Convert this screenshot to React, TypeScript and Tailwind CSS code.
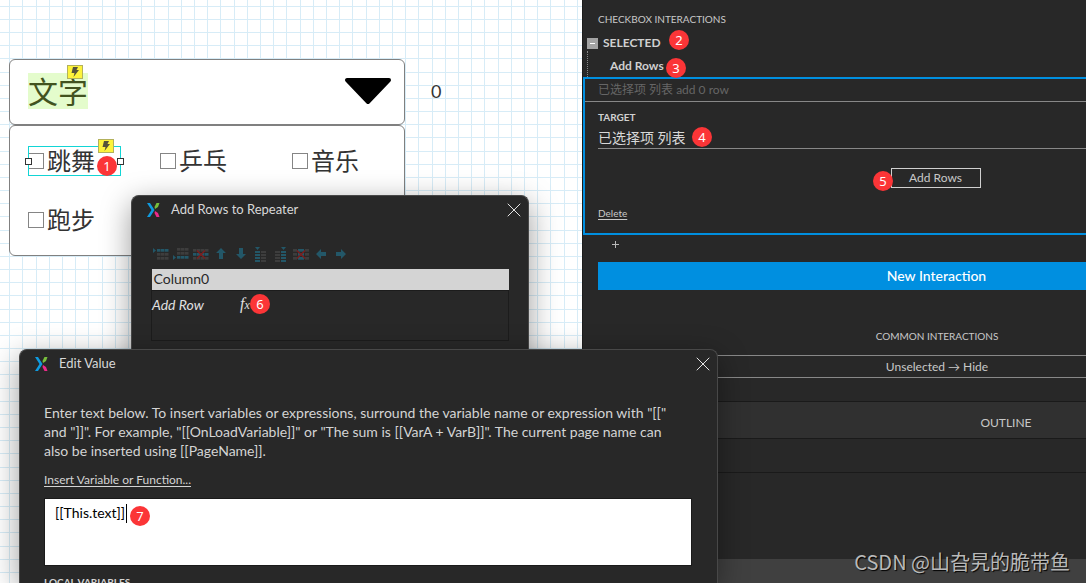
import type { ReactNode } from "react";
import { X } from "lucide-react";

const OPTIONS = ["跳舞", "乒乓", "音乐", "跑步"];

const BADGES = [
  { n: 1, pos: "left-[97px] top-[156px]" },
  { n: 2, pos: "left-[669px] top-[30px]" },
  { n: 3, pos: "left-[666px] top-[58px]" },
  { n: 4, pos: "left-[692px] top-[127px]" },
  { n: 5, pos: "left-[873px] top-[171px]" },
  { n: 6, pos: "left-[250px] top-[294px]" },
  { n: 7, pos: "left-[130px] top-[506px]" },
];

const BLUE = "#235768";
const GRAY = "#3d3d3d";
const RED = "#7a1f1f";

function Cells({ xs, ys, w, h, fill }: { xs: number[]; ys: number[]; w: number; h: number; fill: string }) {
  return (
    <>
      {ys.map((y) => xs.map((x) => <rect key={`${x}-${y}`} x={x} y={y} width={w} height={h} fill={fill} />))}
    </>
  );
}

const TOOLS: { name: string; icon: ReactNode }[] = [
  {
    name: "Insert row above",
    icon: (
      <>
        <path d="M0 1v5l3-2.500z" fill={BLUE} />
        <Cells xs={[4, 8, 12]} ys={[2]} w={3.5} h={2.7} fill={BLUE} />
        <Cells xs={[4, 8, 12]} ys={[6, 10]} w={3.5} h={2.7} fill={GRAY} />
      </>
    ),
  },
  {
    name: "Insert row below",
    icon: (
      <>
        <path d="M0 8v5l3-2.500z" fill={BLUE} />
        <Cells xs={[4, 8, 12]} ys={[1, 5]} w={3.5} h={2.7} fill={GRAY} />
        <Cells xs={[4, 8, 12]} ys={[9]} w={3.5} h={2.7} fill={BLUE} />
      </>
    ),
  },
  {
    name: "Delete row",
    icon: (
      <>
        <Cells xs={[0, 4, 8, 12]} ys={[2, 10]} w={3.5} h={2.7} fill={GRAY} />
        <Cells xs={[0, 4, 8, 12]} ys={[6]} w={3.5} h={2.7} fill={BLUE} />
        <path d="M4 3.500l8 8M12 3.500l-8 8" stroke={RED} strokeWidth="1.500" />
      </>
    ),
  },
  { name: "Move row up", icon: <path d="M8 1l5 5H10v6H6V6H3z" fill={BLUE} /> },
  { name: "Move row down", icon: <path d="M8 12l5-5H10V1H6v6H3z" fill={BLUE} /> },
  {
    name: "Insert column left",
    icon: (
      <>
        <path d="M2 0h5l-2.500 3z" fill={BLUE} />
        <Cells xs={[2]} ys={[4, 7, 10, 13]} w={5} h={2} fill={BLUE} />
        <Cells xs={[8]} ys={[4, 7, 10, 13]} w={5} h={2} fill={GRAY} />
      </>
    ),
  },
  {
    name: "Insert column right",
    icon: (
      <>
        <path d="M8 0h5l-2.500 3z" fill={BLUE} />
        <Cells xs={[2]} ys={[4, 7, 10, 13]} w={5} h={2} fill={GRAY} />
        <Cells xs={[8]} ys={[4, 7, 10, 13]} w={5} h={2} fill={BLUE} />
      </>
    ),
  },
  {
    name: "Delete column",
    icon: (
      <>
        <Cells xs={[0, 12]} ys={[2, 6, 10]} w={4} h={2.7} fill={GRAY} />
        <Cells xs={[5]} ys={[2, 6, 10]} w={6} h={2.7} fill={BLUE} />
        <path d="M4 3.500l8 8M12 3.500l-8 8" stroke={RED} strokeWidth="1.500" />
      </>
    ),
  },
  { name: "Move column left", icon: <path d="M3 7l5-5v3h5v4H8v3z" fill={BLUE} /> },
  { name: "Move column right", icon: <path d="M13 7L8 2v3H3v4h5v3z" fill={BLUE} /> },
];

function CanvasGrid() {
  return (
    <svg className="absolute inset-0 h-full w-full" aria-hidden="true">
      <defs>
        <pattern id="grid" x="-4" y="-7" width="66" height="79" patternUnits="userSpaceOnUse">
          <path
            d="M.5 0v79M13.500 0v79M26.500 0v79M40.500 0v79M53.500 0v79M0 .5h66M0 13.500h66M0 26.500h66M0 39.500h66M0 52.500h66M0 65.500h66"
            stroke="#d7ecf7"
          />
        </pattern>
      </defs>
      <rect width="100%" height="100%" fill="url(#grid)" />
    </svg>
  );
}

function Bolt({ className }: { className: string }) {
  return (
    <span className={`absolute flex h-[14px] w-4 items-center justify-center border border-[#b3b15c] bg-[#fdf33c] ${className}`}>
      <svg width="8" height="10" viewBox="0 0 8 10" aria-hidden="true">
        <path d="M2 0h5L5.500 3H8L2.500 10l1-4H.5z" fill="#55533a" />
      </svg>
    </span>
  );
}

function Logo() {
  return (
    <svg width="13" height="14" viewBox="0 0 13 14" aria-hidden="true">
      <path d="M0 0h3l4.500 7-4.500 7H0l4.500-7z" fill="#0f9be0" />
      <path d="M9.500 0H12.500L11 4 8 6 7.500 4z" fill="#78bf3c" />
      <path d="M7.500 10L8 8l3 2 1.500 4H9.500z" fill="#ee2a8b" />
    </svg>
  );
}

function Dialog({ title, className, children }: { title: string; className: string; children: ReactNode }) {
  return (
    <section
      aria-label={title}
      className={`absolute rounded-t-lg border border-b-0 border-[#484848] bg-[#282828] shadow-[0_8px_30px_rgba(0,0,0,0.4)] ${className}`}
    >
      <header className="flex h-7 items-center gap-[11px] pl-[15px] pr-[2px]">
        <Logo />
        <h2 className="flex-1 text-[13px] text-[#d8d8d8]">{title}</h2>
        <button type="button" aria-label="Close" className="text-[#e4e4e4]">
          <X size={24} strokeWidth={1} absoluteStrokeWidth />
        </button>
      </header>
      {children}
    </section>
  );
}

function Canvas() {
  return (
    <main className="relative flex w-[582px] shrink-0 items-start bg-white pl-[9px] pt-[59px] text-[#333]">
      <CanvasGrid />
      <div className="relative w-[396px]">
        <button
          type="button"
          className="flex h-[66px] w-full items-center justify-between rounded-md border border-[#808080] bg-white pb-[2px] pl-[18px] pr-[11px]"
        >
          <span className="relative bg-[#e4fccc] text-[30px] leading-9 text-[#42531f]">
            文字
            <Bolt className="-top-2 left-[39px]" />
          </span>
          <svg width="50" height="30" viewBox="0 0 50 30" aria-hidden="true">
            <path d="M4 4H46L25 26z" fill="#000" stroke="#000" strokeWidth="4" strokeLinejoin="round" />
          </svg>
        </button>
        <div className="grid h-[131px] grid-cols-[132px_132px_auto] rounded-md border border-[#808080] bg-white py-[6px]">
          {OPTIONS.map((option, i) => (
            <label key={option} className="flex items-center pl-[18px]">
              <span className="relative flex h-[30px] items-center gap-[3px] text-2xl">
                <input type="checkbox" className="size-4 appearance-none border border-[#858585] bg-white" />
                {option}
                {i === 0 && (
                  <span className="absolute -right-[26px] inset-y-0 left-0 border border-[#12d5d5]">
                    <span className="absolute -left-1 top-[11px] size-[7px] border border-[#333] bg-white" />
                    <span className="absolute -right-1 top-[11px] size-[7px] border border-[#333] bg-white" />
                    <Bolt className="-top-2 left-[69px]" />
                  </span>
                )}
              </span>
            </label>
          ))}
        </div>
      </div>
      <span className="relative ml-[26px] mt-5 text-lg leading-6">0</span>
    </main>
  );
}

function InteractionPanel() {
  return (
    <aside className="min-w-0 flex-1 overflow-hidden border-l border-[#1c1c1c] bg-[#282828] text-xs text-[#c8c8c8]">
      <div className="flex h-full min-w-[708px] flex-col">
        <h2 className="pl-[15px] pt-[11px] text-[10px] leading-4">CHECKBOX INTERACTIONS</h2>
        <div className="mt-2 flex h-4 items-center gap-[5px] pl-1">
          <button type="button" aria-label="Collapse" className="flex size-[11px] items-center justify-center bg-[#a3a3a3]">
            <span className="h-px w-[5px] bg-white" />
          </button>
          <h3 className="font-bold text-[#d0d0d0]">SELECTED</h3>
        </div>
        <div className="ml-1 flex h-[26px] items-center border-l border-dotted border-[#888] pl-[22px] pt-1 font-bold text-[#d0d0d0]">
          Add Rows
        </div>

        <section className="border-2 border-[#008fe0]">
          <p className="h-[23px] border-b border-[#888] pl-[13px] leading-[22px] text-[#666]">已选择项 列表 add 0 row</p>
          <div className="pb-3 pl-[13px] pr-4">
            <label htmlFor="target" className="block pb-px pt-[7px] text-[10px] font-bold leading-4 text-[#d0d0d0]">
              TARGET
            </label>
            <input
              id="target"
              defaultValue="已选择项 列表"
              className="block h-[23px] w-full border-b border-[#888] bg-transparent text-sm text-[#d8d8d8] outline-none"
            />
            <div className="flex justify-center pt-[19px]">
              <button type="button" className="h-5 w-[90px] border border-[#d0d0d0] leading-4">
                Add Rows
              </button>
            </div>
            <button type="button" className="mt-[17px] block text-[10px] leading-4 underline underline-offset-2">
              Delete
            </button>
          </div>
        </section>

        <button type="button" aria-label="Add action" className="ml-[29px] mt-[6px] block size-[7px]">
          <svg width="7" height="7" viewBox="0 0 7 7" aria-hidden="true">
            <path d="M3.500 0v7M0 3.500h7" stroke="#b8b8b8" />
          </svg>
        </button>
        <div className="pl-[15px] pr-4 pt-[14px]">
          <button type="button" className="h-7 w-full bg-[#008fe0] text-sm font-medium text-white">
            New Interaction
          </button>
        </div>
        <h2 className="mt-[38px] text-center text-[10px] leading-4">COMMON INTERACTIONS</h2>
        <button type="button" className="mx-4 mt-[11px] h-[23px] border-y border-[#888]">
          Unselected → Hide
        </button>

        <div className="mt-[23px] flex h-[38px] items-center justify-center border-y border-[#1a1a1a] bg-[#303030] pl-[138px] pt-[5px]">
          OUTLINE
        </div>
        <div className="h-[34px] border-b border-[#1a1a1a]" />
        <div className="flex-1" />
        <div className="h-6 bg-[#404040]" />
      </div>
    </aside>
  );
}

export default function App() {
  return (
    <div className="relative flex h-screen overflow-hidden font-[Lato,'Noto_Sans_CJK_SC',sans-serif]">
      <Canvas />
      <InteractionPanel />

      <Dialog title="Add Rows to Repeater" className="left-[131px] top-[195px] h-[388px] w-[398px]">
        <div className="px-[19px] pt-[23px]">
          <div className="flex gap-1 pl-[2px]">
            {TOOLS.map((tool) => (
              <button key={tool.name} type="button" aria-label={tool.name}>
                <svg width="16" height="15" viewBox="0 0 16 15" aria-hidden="true">
                  {tool.icon}
                </svg>
              </button>
            ))}
          </div>
          <table className="mt-[7px] w-full text-left text-sm">
            <thead>
              <tr className="bg-[#d4d4d4] text-[#282828]">
                <th className="h-[21px] pl-[2px] font-normal leading-5">Column0</th>
              </tr>
            </thead>
            <tbody>
              <tr>
                <td className="h-[50px] border border-[#1c1c1c] pt-1 align-top italic leading-5 text-[#e0e0e0]">
                  <div className="flex h-5 items-center">
                    <button type="button" className="w-[88px] text-left italic">
                      Add Row
                    </button>
                    <button type="button" aria-label="Edit value" className="font-['Liberation_Serif',serif] italic">
                      <span className="text-base leading-5">f</span>
                      <span className="text-xs">x</span>
                    </button>
                  </div>
                </td>
              </tr>
            </tbody>
          </table>
        </div>
      </Dialog>

      <Dialog title="Edit Value" className="left-[19px] top-[349px] h-[234px] w-[699px]">
        <div className="px-6 pt-[25px] text-[#d4d4d4]">
          <p className="whitespace-nowrap text-sm leading-[19px]">
            Enter text below. To insert variables or expressions, surround the variable name or expression with "[["
            <br />
            and "]]". For example, "[[OnLoadVariable]]" or "The sum is [[VarA + VarB]]". The current page name can
            <br />
            also be inserted using [[PageName]].
          </p>
          <a href="#variables" className="mt-3 block text-xs leading-4 underline underline-offset-2">
            Insert Variable or Function...
          </a>
          <div className="relative mr-px mt-[10px]">
            <textarea
              aria-label="Value"
              defaultValue="[[This.text]]"
              className="block h-[68px] w-full resize-none border border-[#1a1a1a] bg-white px-[10px] py-1 text-sm leading-5 text-black outline-none"
            />
            <span className="absolute left-[82px] top-[6px] h-[19px] w-px bg-black" />
          </div>
          <h3 className="mt-2 text-[10px] font-bold leading-4">LOCAL VARIABLES</h3>
        </div>
      </Dialog>

      {BADGES.map((badge) => (
        <span
          key={badge.n}
          className={`absolute flex size-5 items-center justify-center rounded-full bg-[#fb3537] font-['Noto_Sans',sans-serif] text-[13px] leading-5 text-white ${badge.pos}`}
        >
          {badge.n}
        </span>
      ))}

      <span className="absolute bottom-[5px] right-4 font-['Noto_Sans_CJK_SC',sans-serif] text-xl leading-8 text-[#b9b9b9] [text-shadow:1px_1px_1px_#000]">
        CSDN @山旮旯的脆带鱼
      </span>
    </div>
  );
}
